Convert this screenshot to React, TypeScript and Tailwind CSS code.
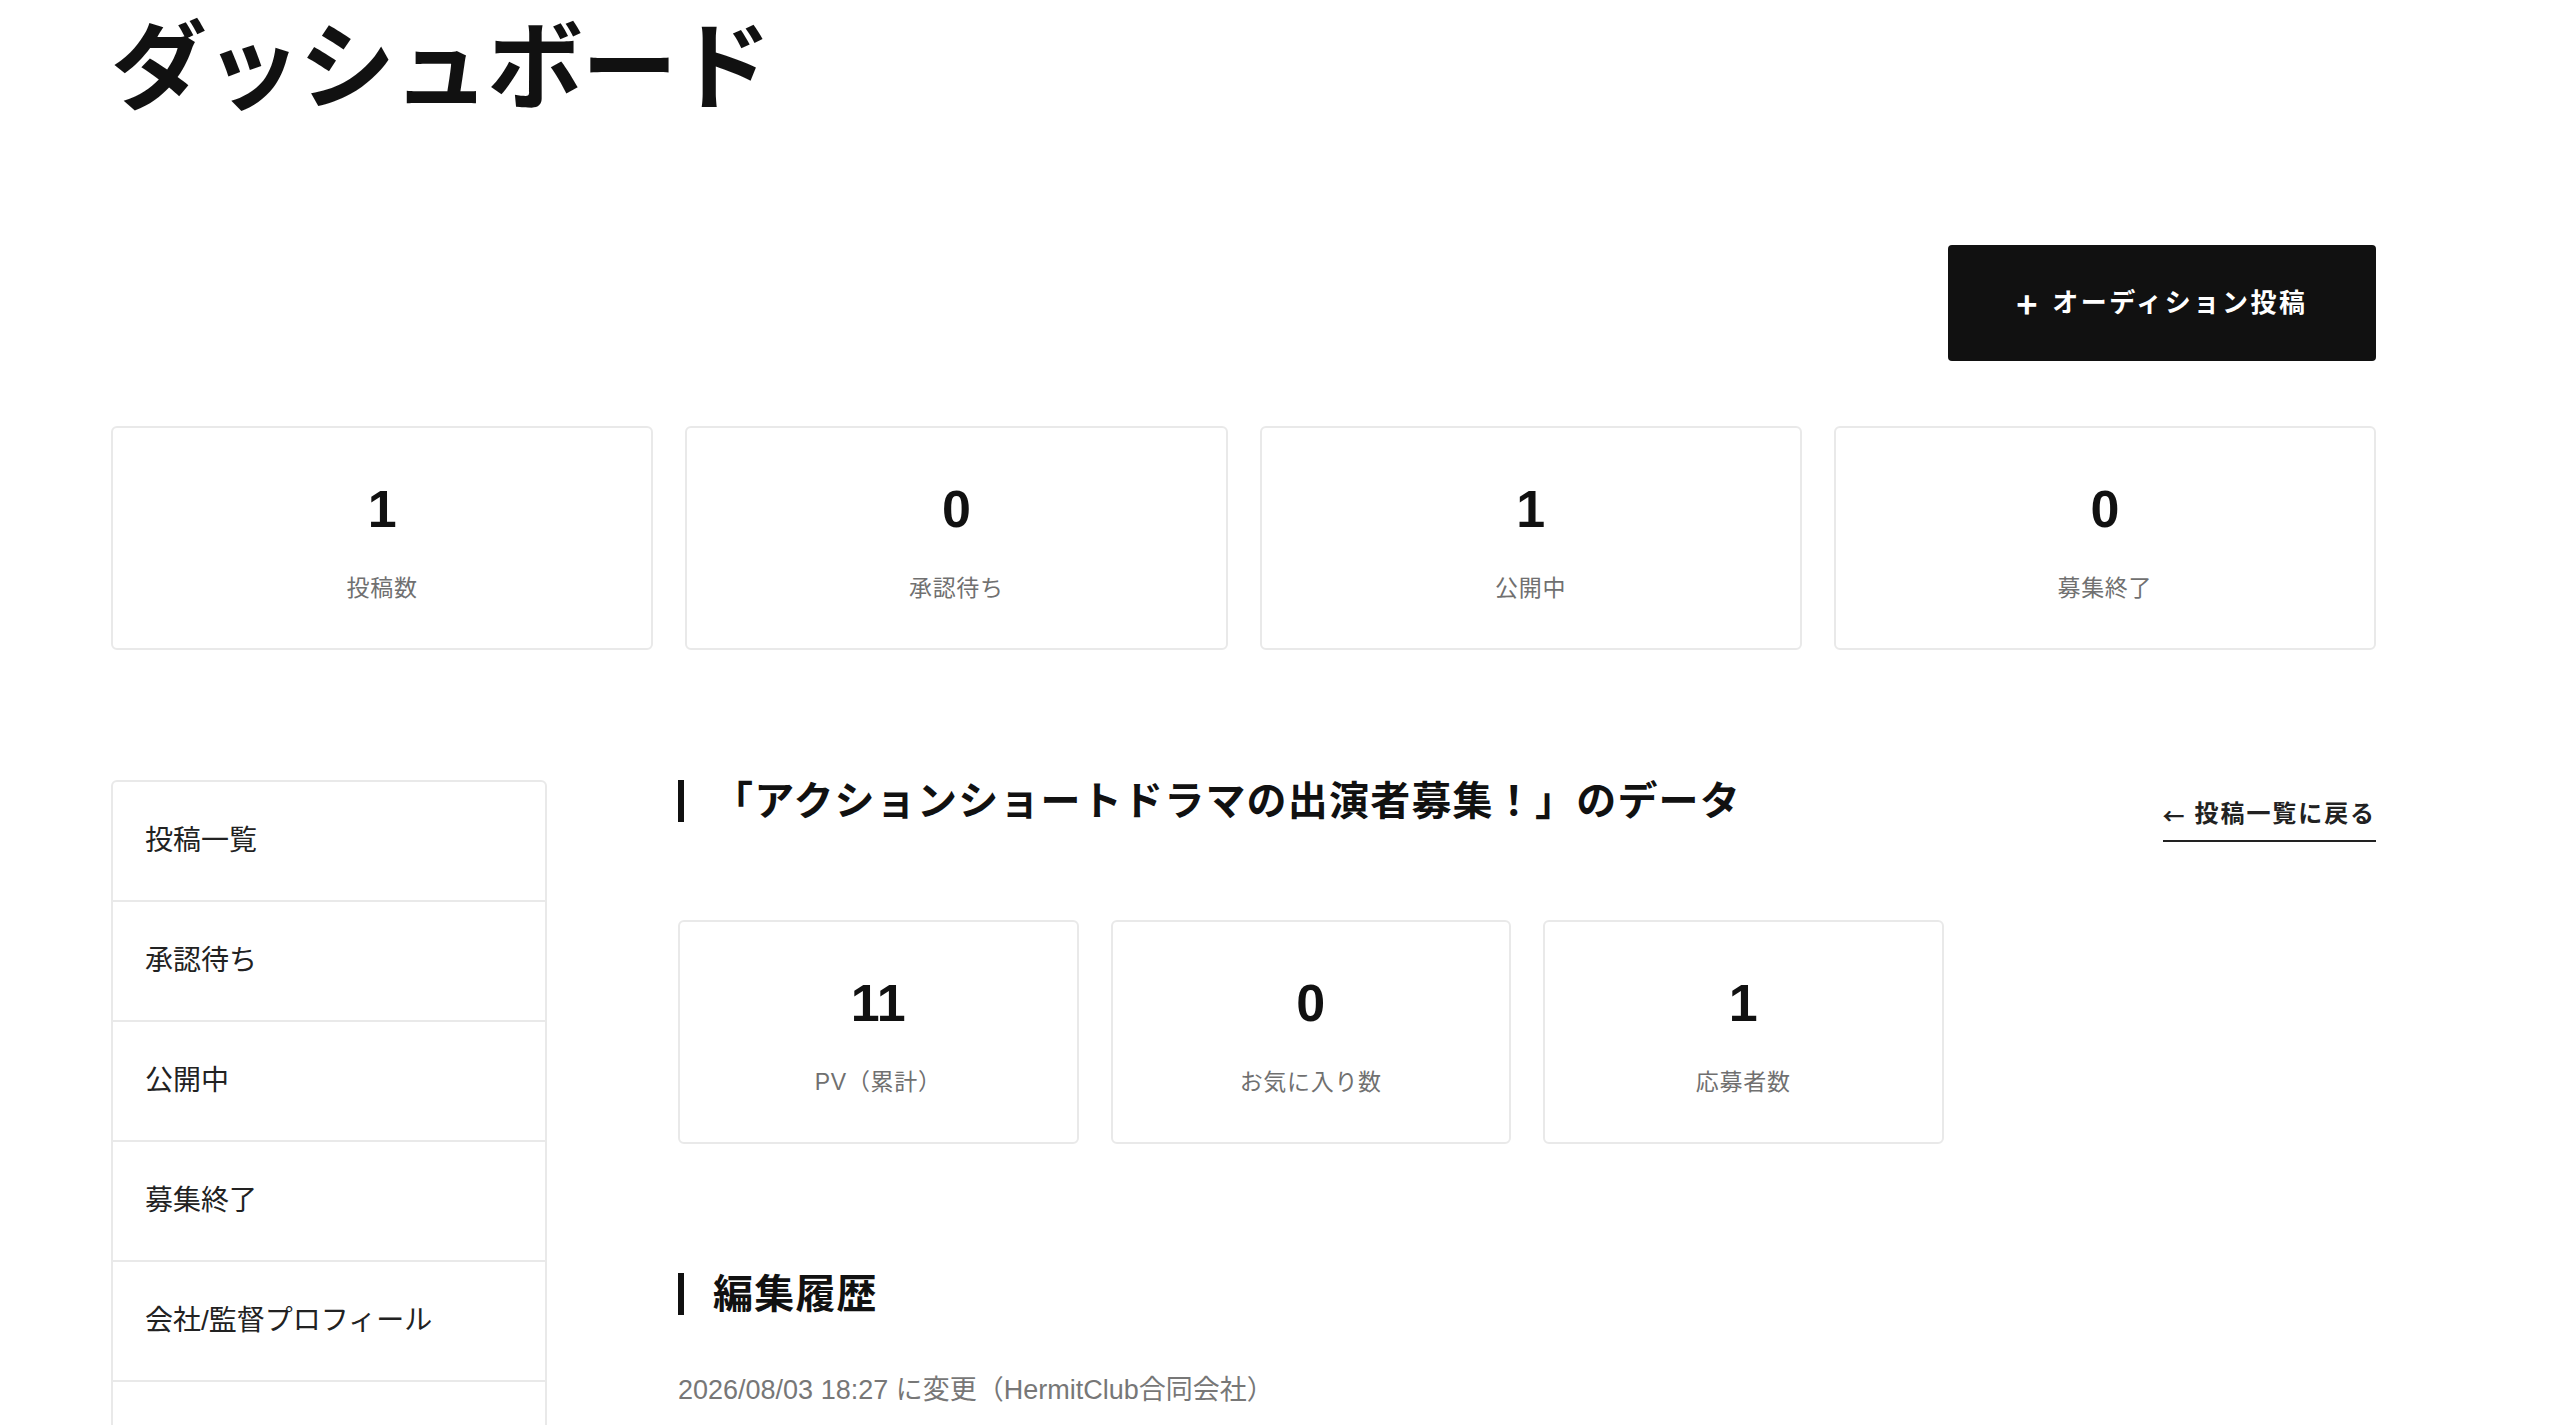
import React from 'react';

const font = "font-['Liberation_Sans','Noto_Sans_CJK_JP',sans-serif]";

const overallStats = [
  { value: '1', label: '投稿数' },
  { value: '0', label: '承認待ち' },
  { value: '1', label: '公開中' },
  { value: '0', label: '募集終了' },
];

const postStats = [
  { value: '11', label: 'PV（累計）' },
  { value: '0', label: 'お気に入り数' },
  { value: '1', label: '応募者数' },
];

const menu = ['投稿一覧', '承認待ち', '公開中', '募集終了', '会社/監督プロフィール', ''];

const StatCard: React.FC<{ value: string; label: string }> = ({ value, label }) => (
  <div className="h-[224px] border-2 border-[#e9e9e9] rounded-[6px] bg-white flex flex-col items-center pt-[55px]">
    <div className="text-[52px] leading-[52px] font-bold text-[#111]">{value}</div>
    <div className="mt-[42px] text-[23px] leading-[22px] tracking-[0.03em] text-[#707070]">{label}</div>
  </div>
);

const SectionTitle: React.FC<{ children: React.ReactNode }> = ({ children }) => (
  <div className="flex items-center h-[42px]">
    <div className="w-[6px] h-[42px] bg-[#111]" />
    <h2 className="ml-[29px] text-[40px] leading-[42px] font-bold tracking-[0.03em] text-[#111]">{children}</h2>
  </div>
);

export default function App() {
  return (
    <div className={`min-h-screen bg-white ${font}`}>
      <div className="ml-[111px] w-[2265px]">
        <h1 className="pt-[20px] text-[96px] leading-[96px] font-bold tracking-[-0.02em] text-[#111]">ダッシュボード</h1>

        <div className="mt-[129px] flex justify-end">
          <button className="w-[428px] h-[116px] rounded-[4px] bg-[#111] text-white text-[26px] font-bold tracking-[0.1em] flex items-center justify-center">
            <span className="text-[36px] leading-none font-['Noto_Sans_CJK_JP'] mr-[12px] -mt-[3px]">+</span>
            オーディション投稿
          </button>
        </div>

        <div className="mt-[65px] grid grid-cols-4 gap-[32px]">
          {overallStats.map(s => (
            <StatCard key={s.label} value={s.value} label={s.label} />
          ))}
        </div>

        <div className="mt-[130px] flex items-start">
          <nav className="w-[436px] shrink-0 border-2 border-[#e9e9e9] rounded-[6px] overflow-hidden">
            {menu.map((item, i) => (
              <div
                key={i}
                className={`h-[120px] flex items-center pl-[32px] text-[28px] text-[#222] ${i < menu.length - 1 ? 'border-b-2 border-[#e9e9e9]' : ''}`}
              >
                {item}
              </div>
            ))}
          </nav>

          <main className="ml-[131px] flex-1">
            <div className="h-[42px] flex items-start justify-between">
              <SectionTitle>「アクションショートドラマの出演者募集！」のデータ</SectionTitle>
              <a className="mt-[22px] pb-[14px] border-b-2 border-[#222] text-[24px] leading-[24px] font-bold tracking-[0.08em] text-[#222] flex items-center">
                <span className="font-['Noto_Sans_CJK_JP'] text-[22px] mr-[10px] tracking-normal">←</span>
                投稿一覧に戻る
              </a>
            </div>

            <div className="mt-[98px] grid grid-cols-4 gap-[32px]">
              {postStats.map(s => (
                <StatCard key={s.label} value={s.value} label={s.label} />
              ))}
            </div>

            <div className="mt-[129px]">
              <SectionTitle>編集履歴</SectionTitle>
            </div>

            <p className="mt-[56px] text-[27px] leading-[39px] text-[#777]">
              2026/08/03 18:27 に変更（HermitClub合同会社）
            </p>
          </main>
        </div>
      </div>
    </div>
  );
}
